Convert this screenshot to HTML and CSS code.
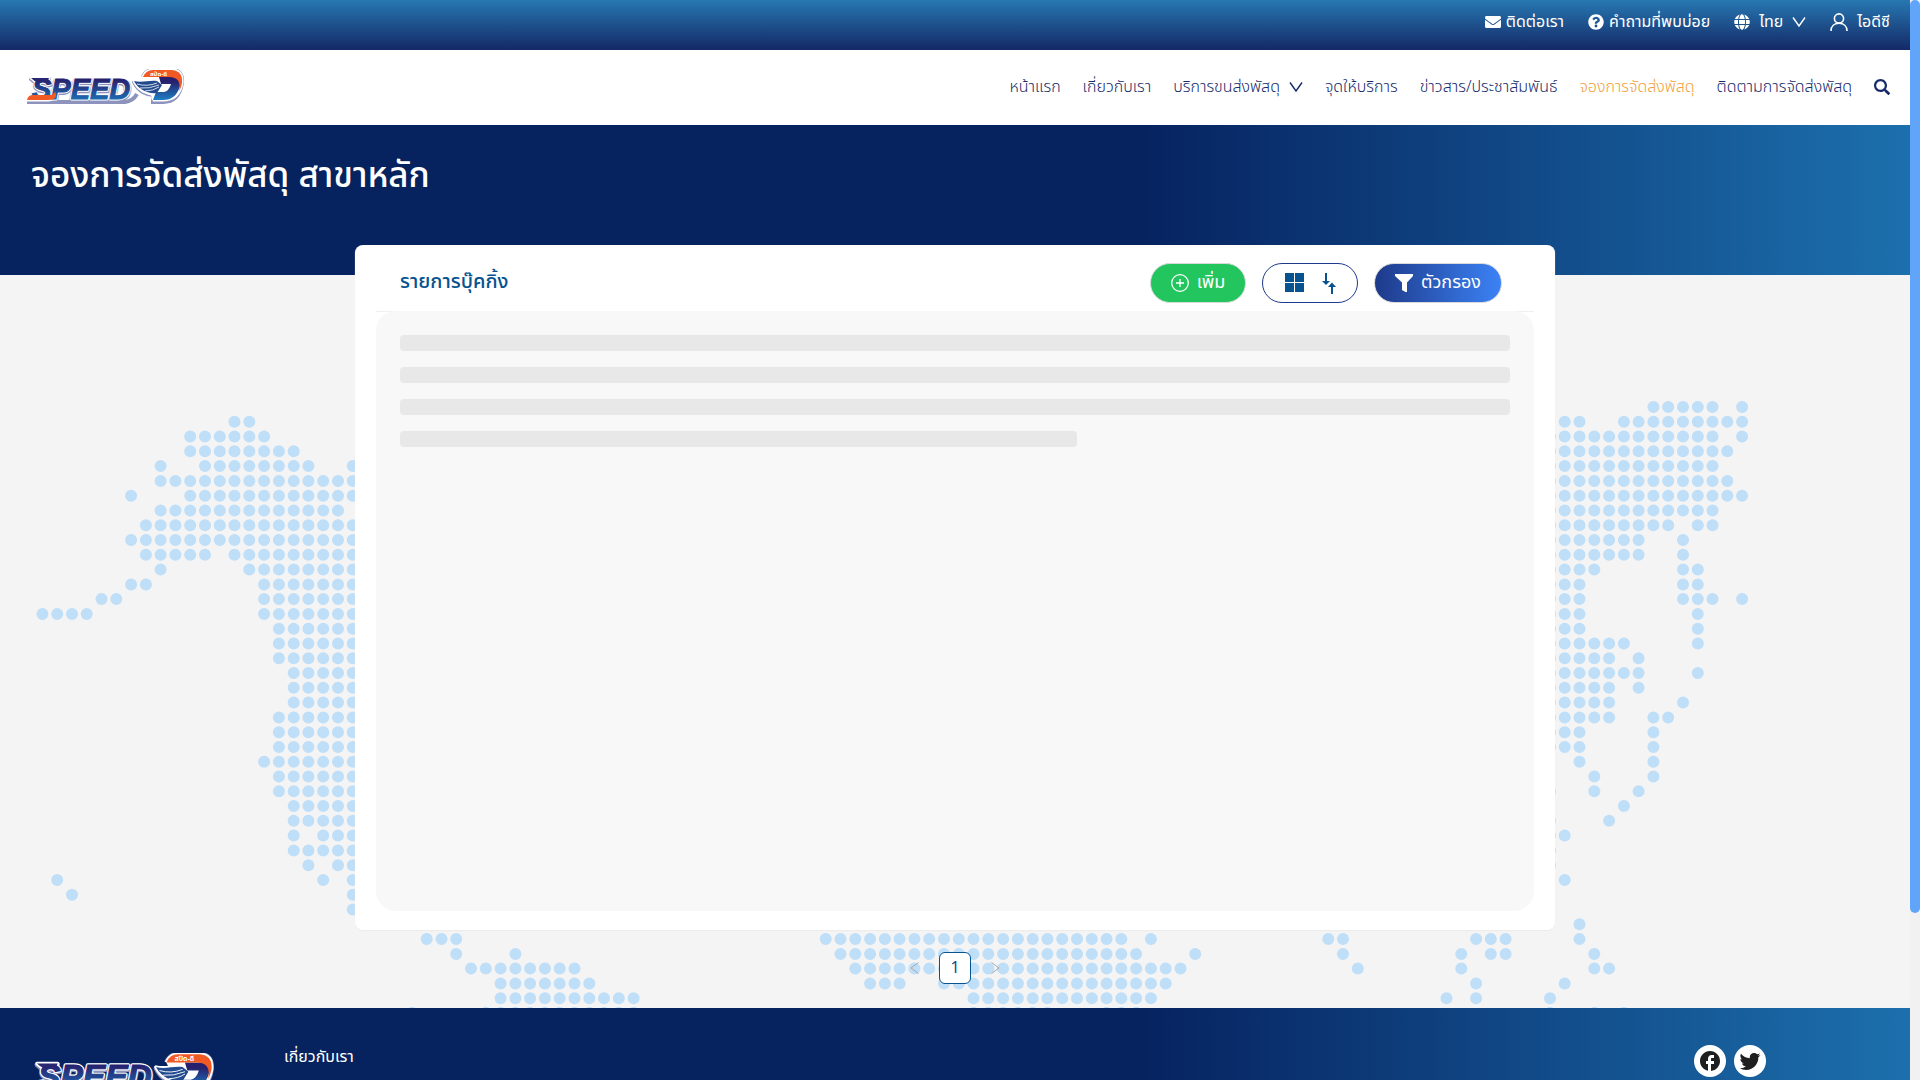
FILE: index.html
```html
<!DOCTYPE html>
<html lang="th">
<head>
<meta charset="utf-8">
<title>จองการจัดส่งพัสดุ</title>
<link rel="stylesheet" href="styles.css">
</head>
<body>
<svg class="defs" aria-hidden="true">
  <defs>
    <linearGradient id="ink" x1="0" y1="0" x2="0" y2="1">
      <stop offset="0.2" stop-color="#27206d"/><stop offset="1" stop-color="#1c7fc4"/>
    </linearGradient>
    <g id="logo-shape">
      <text class="logo-word" x="7" y="30">SPEED</text>
      <path d="M6 9H24L22 13H12Q9 12 6 9Z"/>
      <path d="M135 8H146Q152 8 151 15L148 23Q146 30 138 30H128L133 15H142L140 23" />
      <path d="M109 12C117 14 124 11 133 12L137 16L132 25C122 26 113 21 109 12Z"/>
    </g>
    <symbol id="logo" viewBox="0 0 160 36">
      <use href="#logo-shape" class="logo-shadow" y="1"/>
      <path class="logo-shadow" d="M118 8Q121 1 128 1H147Q158 1 157 14Q154 33 138 33H126M2 33H100Q108 32 112 25"/>
      <use href="#logo-shape" class="logo-halo"/>
      <path class="logo-halo" d="M118 8Q121 1 128 1H147Q158 1 157 14Q154 31 138 31H128M2 31Q3 26 8 26H31Q28 31 24 31Z"/>
      <text class="logo-word" x="7" y="30" fill="url(#ink)" stroke="url(#ink)">SPEED</text>
      <path fill="#2a2772" d="M6 9H24L22 13H12Q9 12 6 9Z"/>
      <path fill="url(#ink)" fill-rule="evenodd" d="M134 8H150Q157 9 155 17Q151 31 138 31H128L131 23H139Q144 22 146 15H136Z"/>
      <path fill="#f15a24" d="M118 8Q121 1 128 1H147Q158 2 157 14Q156 19 154 22Q157 8 144 8Z"/>
      <path fill="#f15a24" d="M2 31Q3 26 8 26H25Q30 25 30 22Q34 31 23 31Z"/>
      <path fill="#224a8f" d="M109 12C117 14 124 11 132 12L137 16L132 24C122 25 113 20 109 12Z"/>
      <path fill="none" stroke="#fff" stroke-width="0.8" d="M112 15Q122 18 132 14M115 19Q124 20 134 16M120 22Q128 22 134 18"/>
      <text class="logo-tag" x="125" y="7">สปีด-ดี</text>
    </symbol>
    <symbol id="chevron" viewBox="0 0 14 14"><path d="M1 2.500L7 11L13 2.500" fill="none" stroke="currentColor" stroke-width="1.400"/></symbol>
  </defs>
</svg>

<div class="shell">
  <div class="page">
    <header>
      <div class="topbar">
        <a class="toplink" href="#"><svg class="icon-16" viewBox="0 0 512 512"><path fill="currentColor" d="M502.300 190.800c3.900-3.100 9.700-.2 9.700 4.700V400c0 26.500-21.500 48-48 48H48c-26.500 0-48-21.500-48-48V195.600c0-5 5.700-7.800 9.700-4.700 22.400 17.400 52.100 39.500 154.100 113.600 21.100 15.400 56.700 47.800 92.200 47.600 35.700.3 72-32.800 92.300-47.600 102-74.100 131.600-96.300 154-113.700zM256 320c23.200.4 56.600-29.200 73.400-41.400 132.700-96.300 142.800-104.700 173.400-128.700 5.800-4.500 9.200-11.500 9.200-18.900v-19c0-26.500-21.500-48-48-48H48c-26.500 0-48 21.500-48 48v19c0 7.400 3.400 14.300 9.200 18.900 30.600 23.900 40.700 32.400 173.400 128.700 16.800 12.200 50.200 41.800 73.400 41.400z"/></svg>ติดต่อเรา</a>
        <a class="toplink" href="#"><svg class="icon-16" viewBox="0 0 512 512"><path fill="currentColor" d="M504 256c0 136.997-111.043 248-248 248S8 392.997 8 256C8 119.083 119.043 8 256 8s248 111.083 248 248zM262.655 90c-54.497 0-89.255 22.957-116.549 63.758-3.536 5.286-2.353 12.415 2.715 16.258l34.699 26.310c5.205 3.947 12.621 3.008 16.665-2.122 17.864-22.658 30.113-35.797 57.303-35.797 20.429 0 45.698 13.148 45.698 32.958 0 14.976-12.363 22.667-32.534 33.976C247.128 238.528 216 254.941 216 296v4c0 6.627 5.373 12 12 12h56c6.627 0 12-5.373 12-12v-1.333c0-28.462 83.186-29.647 83.186-106.667 0-58.002-60.165-102-116.531-102zM256 338c-25.365 0-46 20.635-46 46 0 25.364 20.635 46 46 46s46-20.636 46-46c0-25.365-20.635-46-46-46z"/></svg>คำถามที่พบบ่อย</a>
        <button class="toplink toplink-wide" type="button"><svg class="icon-16" viewBox="0 0 496 512"><path fill="currentColor" d="M336.500 160C322 70.700 287.800 8 248 8s-74 62.700-88.500 152h177zM152 256c0 22.200 1.200 43.500 3.300 64h185.300c2.100-20.500 3.300-41.800 3.300-64s-1.200-43.500-3.300-64H155.300c-2.100 20.500-3.300 41.800-3.300 64zm324.700-96c-28.600-67.900-86.500-120.400-158-141.600 24.400 33.800 41.200 84.700 50 141.600h108zM177.200 18.400C105.800 39.600 47.800 92.100 19.300 160h108c8.700-56.900 25.500-107.800 49.900-141.600zM487.400 192H372.700c2.100 21 3.300 42.500 3.300 64s-1.200 43-3.300 64h114.600c5.500-20.500 8.600-41.800 8.600-64s-3.100-43.500-8.500-64zM120 256c0-21.500 1.200-43 3.300-64H8.600C3.200 212.500 0 233.800 0 256s3.200 43.500 8.600 64h114.600c-2-21-3.200-42.500-3.200-64zm39.500 96c14.500 89.300 48.700 152 88.500 152s74-62.700 88.500-152h-177zm159.300 141.600c71.400-21.200 129.400-73.700 158-141.600h-108c-8.800 56.900-25.600 107.800-50 141.600zM19.300 352c28.600 67.900 86.500 120.400 158 141.600-24.400-33.800-41.200-84.700-50-141.600h-108z"/></svg>ไทย<svg class="icon-14"><use href="#chevron"/></svg></button>
        <a class="toplink toplink-wide" href="#"><svg class="icon-18" viewBox="0 0 18 18" fill="none" stroke="currentColor" stroke-width="1.600"><circle cx="9" cy="5.500" r="4.600"/><path d="M1 18C1 13 4.500 10.200 9 10.200S17 13 17 18"/></svg>ไอดีซี</a>
      </div>
      <nav class="nav">
        <a class="brand" href="#" aria-label="Speed-D"><svg class="logo"><use href="#logo"/></svg></a>
        <a href="#">หน้าแรก</a>
        <a href="#">เกี่ยวกับเรา</a>
        <a class="has-menu" href="#">บริการขนส่งพัสดุ<svg class="icon-14"><use href="#chevron"/></svg></a>
        <a href="#">จุดให้บริการ</a>
        <a href="#">ข่าวสาร/ประชาสัมพันธ์</a>
        <a class="active" href="#">จองการจัดส่งพัสดุ</a>
        <a href="#">ติดตามการจัดส่งพัสดุ</a>
        <button class="search" type="button" aria-label="ค้นหา"><svg class="icon-16" viewBox="0 0 512 512"><path fill="currentColor" d="M505 442.700L405.300 343c-4.500-4.500-10.600-7-17-7H372c27.600-35.300 44-79.700 44-128C416 93.100 322.900 0 208 0S0 93.100 0 208s93.100 208 208 208c48.300 0 92.700-16.400 128-44v16.300c0 6.400 2.500 12.500 7 17l99.700 99.700c9.400 9.400 24.600 9.400 33.900 0l28.300-28.300c9.400-9.400 9.400-24.600.1-34zM208 346c-76 0-138-62-138-138S132 70 208 70s138 62 138 138-62 138-138 138z"/></svg></button>
      </nav>
    </header>

    <section class="hero"><h1>จองการจัดส่งพัสดุ สาขาหลัก</h1></section>

    <main class="main">
      <svg class="map" viewBox="0 0 1910 733" preserveAspectRatio="xMidYMin slice" aria-hidden="true"><path id="dots"/></svg>
      <section class="card">
        <div class="card-head">
          <h2>รายการบุ๊คกิ้ง</h2>
          <button class="btn btn-add" type="button"><svg class="icon-18" viewBox="0 0 18 18" fill="none" stroke="currentColor" stroke-width="1.300"><circle cx="9" cy="9" r="8.300"/><path d="M9 5V13M5 9H13"/></svg>เพิ่ม</button>
          <button class="btn btn-view" type="button" aria-label="มุมมอง"><svg class="icon-20" viewBox="0 0 20 20"><path fill="currentColor" d="M0 0H9V9H0zM10 0H19V9H10zM0 10H9V19H0zM10 10H19V19H10z"/></svg><svg class="icon-20" viewBox="0 0 20 20"><path fill="currentColor" d="M6 0H8V8H11L7 12L3 8H6zM12 21V14H9L13 9.500L17 14H14V21z"/></svg></button>
          <button class="btn btn-filter" type="button"><svg class="icon-18" viewBox="0 0 18 18"><path fill="currentColor" d="M0 0H18V2L12 8.500V18L10.500 18L7 16V8.500L0 2z"/></svg>ตัวกรอง</button>
        </div>
        <div class="skeleton">
          <div class="bar"></div><div class="bar"></div><div class="bar"></div><div class="bar bar-short"></div>
        </div>
      </section>
      <nav class="pager" aria-label="หน้า">
        <button type="button" disabled aria-label="ก่อนหน้า"><svg class="icon-12" viewBox="0 0 12 12"><path d="M9.500 0.500L2 6L9.500 11.500" fill="none" stroke="currentColor"/></svg></button>
        <button class="current" type="button">1</button>
        <button type="button" disabled aria-label="ถัดไป"><svg class="icon-12" viewBox="0 0 12 12"><path d="M2.500 0.500L10 6L2.500 11.500" fill="none" stroke="currentColor"/></svg></button>
      </nav>
    </main>

    <footer class="footer">
      <a class="footer-brand" href="#" aria-label="Speed-D"><svg class="logo-large"><use href="#logo"/></svg></a>
      <a class="footer-link" href="#">เกี่ยวกับเรา</a>
      <div class="social">
        <a href="#" aria-label="Facebook"><svg class="icon-24" viewBox="0 0 24 24"><path fill="currentColor" d="M22 12c0-5.520-4.480-10-10-10S2 6.480 2 12c0 4.840 3.440 8.870 8 9.800V15H8v-3h2V9.500C10 7.570 11.570 6 13.500 6H16v3h-2c-.55 0-1 .45-1 1v2h3v3h-3v6.950c5.050-.5 9-4.760 9-9.950z"/></svg></a>
        <a href="#" aria-label="Twitter"><svg class="icon-24" viewBox="0 0 24 24"><path fill="currentColor" d="M22.460 6c-.77.35-1.600.58-2.460.69.88-.53 1.560-1.370 1.880-2.380-.83.5-1.750.85-2.720 1.050C18.370 4.500 17.260 4 16 4c-2.350 0-4.270 1.920-4.270 4.290 0 .34.040.67.110.98C8.280 9.090 5.110 7.380 3 4.790c-.37.63-.58 1.370-.58 2.150 0 1.490.75 2.810 1.910 3.560-.71 0-1.370-.2-1.950-.5v.03c0 2.080 1.480 3.820 3.440 4.210a4.220 4.220 0 0 1-1.930.07 4.280 4.280 0 0 0 4 2.980 8.521 8.521 0 0 1-5.330 1.840c-.34 0-.68-.02-1.020-.06C3.440 20.290 5.700 21 8.120 21 16 21 20.330 14.460 20.330 8.790c0-.19 0-.37-.01-.56.84-.6 1.560-1.360 2.140-2.230z"/></svg></a>
      </div>
    </footer>
  </div>
  <div class="rail" aria-hidden="true"><div class="thumb"></div></div>
</div>
<script src="map.js"></script>
</body>
</html>
```
FILE: styles.css
```css
* { box-sizing: border-box; }
body {
  margin: 0;
  font-family: "Noto Sans Thai", "Noto Sans", "Open Sans", sans-serif;
  font-size: 16px;
  line-height: 24px;
  color: #172b6a;
}
a { color: inherit; text-decoration: none; }
button { font: inherit; color: inherit; background: none; border: 0; padding: 0; margin: 0; }
h1, h2 { margin: 0; font-weight: 400; }
svg { display: block; flex: none; }

.defs { position: absolute; width: 0; height: 0; }
.icon-12 { width: 12px; height: 12px; }
.icon-14 { width: 14px; height: 14px; }
.icon-16 { width: 16px; height: 16px; }
.icon-18 { width: 18px; height: 18px; }
.icon-20 { width: 20px; height: 20px; overflow: visible; }
.icon-24 { width: 24px; height: 24px; }

.shell { display: grid; grid-template-columns: 1fr 10px; height: 100vh; overflow: hidden; }
.page { min-width: 0; }
.rail { background: #f1f1f1; height: 100vh; }
.thumb { height: calc(100% - 167px); background: #60a5fa; border-radius: 5px; }

.topbar {
  display: flex;
  justify-content: flex-end;
  align-items: center;
  gap: 24px;
  height: 50px;
  padding: 0 20px 6px;
  color: #fff;
  background: linear-gradient(#2778b2, #142966);
}
.toplink { display: flex; align-items: center; gap: 5px; }
.toplink-wide { gap: 9px; }

.nav {
  display: flex;
  align-items: center;
  gap: 22px;
  height: 75px;
  padding: 0 20px 2px 25px;
  background: #fff;
  font-weight: 300;
}
.brand { margin-right: auto; }
.has-menu { display: flex; align-items: center; gap: 9px; }
.active { color: #f2a03d; }
.logo { width: 160px; height: 36px; }
.logo-large { width: 185px; height: 42px; }
.logo-word { font: italic 700 29px "Liberation Sans", sans-serif; }
.logo-tag { font-size: 6px; font-weight: 700; fill: #fff; }
.logo-halo { fill: #fff; stroke: #fff; stroke-width: 3px; stroke-linejoin: round; }
.logo-shadow { fill: none; stroke: #8e93bd; stroke-width: 4px; stroke-linejoin: round; }

.hero, .footer { background: linear-gradient(90deg, #062360 60%, #124b89 81%, #1c70ad); }
.hero { height: 150px; padding: 28px 31px; color: #fff; }
.hero h1 { font-size: 35px; line-height: 48px; font-weight: 500; }

.main { position: relative; padding-bottom: 24px; background: #f4f4f4; }
.map { position: absolute; top: 0; left: 0; width: 100%; height: 100%; }
.map path { fill: none; stroke: #bfdef8; stroke-width: 12px; stroke-linecap: round; }

.card {
  position: relative;
  width: 100%;
  max-width: 1200px;
  margin: 0 auto;
  top: -30px;
  margin-bottom: -8px;
  padding: 0 21px 19px;
  background: #fff;
  box-shadow: 0 1px 1px #ececec;
  border-radius: 8px;
}
.card-head {
  display: flex;
  align-items: center;
  gap: 16px;
  height: 67px;
  padding: 10px 32px 0 24px;
  border-bottom: 1px solid #f0f0f0;
}
.card-head h2 { margin-right: auto; padding-bottom: 3px; font-size: 20px; line-height: 30px; color: #07528f; font-weight: 500; }
.btn { display: flex; align-items: center; justify-content: center; gap: 8px; height: 40px; border-radius: 20px; border: 1px solid #d9d9d9; color: #fff; font-size: 18px; }
.btn-add { width: 96px; background: #22c55e; }
.btn-view { width: 96px; gap: 14px; padding-left: 4px; color: #07528f; border-color: #1e3a8a; background: #fff; }
.btn-filter { width: 128px; background: linear-gradient(90deg, #1e3a8a, #3b82f6); }

.skeleton { display: grid; align-content: start; gap: 16px; min-height: 600px; margin-top: -1px; padding: 24px; background: #f8f8f8; border-radius: 20px; }
.bar { height: 16px; border-radius: 4px; background: #e8e8e8; }
.bar-short { width: 61%; }

.pager { position: relative; display: flex; justify-content: center; gap: 8px; }
.pager button { display: grid; place-items: center; width: 32px; height: 32px; color: #a8a8a8; }
.pager .current { color: #07528f; background: #fff; border: 1px solid #07528f; border-radius: 6px; }

.footer { display: flex; align-items: flex-start; padding: 37px 144px 40px 30px; color: #fff; min-height: 240px; }
.footer-brand { width: 254px; padding-top: 8px; }
.footer-link { margin-right: auto; }
.social { display: flex; gap: 8px; }
.social a { display: grid; place-items: center; width: 32px; height: 32px; background: #fff; border-radius: 50%; color: #1f1f1f; }
```
FILE: map.js
```js
// Runs of dots in each row of the world map, written as first-last column.
const rows = [
  "109-113 115",
  "13-14 103-104 107-115",
  "10-15 102-113 115",
  "10-17 102-114",
  "8 11-18 21 102-113",
  "8-21 102-114",
  "6 10-21 102-115",
  "8-20 102-113",
  "7-21 102-110 112-113",
  "6-21 102-108 111",
  "7-11 13-21 102-108 111",
  "8 14-21 102-105 111-112",
  "6-7 15-21 102-104 111-112",
  "4-5 15-21 102-104 111-113 115",
  "0-3 15-21 102-104 112",
  "16-21 102-104 112",
  "16-21 102-107 112",
  "16-21 102-106 108",
  "17-21 102-108 112",
  "17-21 102-106 108",
  "17-21 102-106 111",
  "16-21 102-106 109-110",
  "16-21 102-104 109",
  "16-21 102-104 109",
  "15-21 104 109",
  "16-21 105 109",
  "16-21 102 105 108",
  "17-21 107",
  "17-21 102 106",
  "17 19-21 102-103",
  "17-21 102",
  "18 20-21 102",
  "1 19 21 103",
  "2 21",
  "21",
  "104",
  "26-28 53-73 75 87-88 97-99 104",
  "28 32 54-74 78 88 96 98-99 105",
  "29-36 55-77 89 96 105-106",
  "31-37 56-58 61-76 97 103",
  "31-40 63-75 95 97 102",
  "25 30-40 63-68 72-74 102 105 107"
];
const pitch = 14.78;
let path = "";
rows.forEach((row, r) => row.split(" ").forEach(run => {
  const [first, last = first] = run.split("-").map(Number);
  for (let c = first; c <= last; c++) {
    path += `M${(42.4 + c * pitch).toFixed(1)} ${(132 + r * pitch).toFixed(1)}h0.01`;
  }
}));
document.getElementById("dots").setAttribute("d", path);
```
